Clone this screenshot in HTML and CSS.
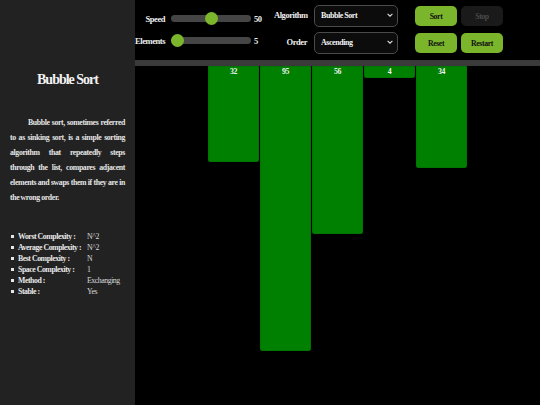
FILE: index.html
```html
<!DOCTYPE html>
<html lang="en">
<head>
<meta charset="utf-8">
<title>Sorting Visualizer</title>
<link rel="stylesheet" href="styles.css">
</head>
<body>
<aside class="sidebar">
  <h1 class="algo-title">Bubble Sort</h1>
  <p class="algo-desc">Bubble sort, sometimes referred to as sinking sort, is a simple sorting algorithm that repeatedly steps through the list, compares adjacent elements and swaps them if they are in the wrong order.</p>
  <ul class="facts">
    <li><span class="fact-label">Worst Complexity :</span><span class="fact-value">N^2</span></li>
    <li><span class="fact-label">Average Complexity :</span><span class="fact-value">N^2</span></li>
    <li><span class="fact-label">Best Complexity :</span><span class="fact-value">N</span></li>
    <li><span class="fact-label">Space Complexity :</span><span class="fact-value">1</span></li>
    <li><span class="fact-label">Method :</span><span class="fact-value">Exchanging</span></li>
    <li><span class="fact-label">Stable :</span><span class="fact-value">Yes</span></li>
  </ul>
</aside>
<main class="main">
  <header class="toolbar">
    <div class="group sliders">
      <label class="ctl-label" for="speed">Speed</label>
      <input class="range" id="speed" type="range" min="1" max="99" value="50">
      <span class="range-value">50</span>
      <label class="ctl-label" for="elements">Elements</label>
      <input class="range" id="elements" type="range" min="5" max="100" value="5">
      <span class="range-value">5</span>
    </div>
    <div class="group selects">
      <label class="ctl-label" for="algo">Algorithm</label>
      <div class="select-wrap">
        <select class="select" id="algo"><option>Bubble Sort</option></select>
        <svg class="chev" viewBox="0 0 10 6" width="6" height="4"><path d="M1 1 L5 5 L9 1" fill="none" stroke="#ddd" stroke-width="1.8"/></svg>
      </div>
      <label class="ctl-label" for="order">Order</label>
      <div class="select-wrap">
        <select class="select" id="order"><option>Ascending</option></select>
        <svg class="chev" viewBox="0 0 10 6" width="6" height="4"><path d="M1 1 L5 5 L9 1" fill="none" stroke="#ddd" stroke-width="1.8"/></svg>
      </div>
    </div>
    <div class="group buttons">
      <button class="btn">Sort</button>
      <button class="btn btn-disabled">Stop</button>
      <button class="btn">Reset</button>
      <button class="btn">Restart</button>
    </div>
  </header>
  <div class="divider"></div>
  <section class="bars">
    <div class="bar" style="height:96px"><span class="bar-value">32</span></div>
    <div class="bar" style="height:285px"><span class="bar-value">95</span></div>
    <div class="bar" style="height:168px"><span class="bar-value">56</span></div>
    <div class="bar" style="height:12px"><span class="bar-value">4</span></div>
    <div class="bar" style="height:102px"><span class="bar-value">34</span></div>
  </section>
</main>
</body>
</html>
```

FILE: styles.css
```css
* { box-sizing: border-box; }
html, body {
  margin: 0;
  height: 405px;
  overflow: hidden;
  background: #000;
  font-family: "Liberation Serif", "Times New Roman", serif;
  font-weight: bold;
  color: #e8e8e8;
}
body { display: flex; }

.sidebar {
  width: 135px;
  flex: none;
  height: 405px;
  background: #222;
  padding: 72px 10px 0 10px;
}
.algo-title {
  margin: 0;
  text-align: center;
  font-size: 14px;
  line-height: 16px;
  color: #f2f2f2;
  letter-spacing: -1px;
}
.algo-desc {
  margin: 27px 0 0 0;
  font-size: 7.8px;
  line-height: 15px;
  letter-spacing: -0.36px;
  word-spacing: -0.3px;
  text-align: justify;
  text-indent: 18px;
  color: #e6e6e6;
}
.facts {
  margin: 26px 0 0 0;
  padding: 0;
  list-style: none;
  font-size: 7.8px;
  line-height: 11px;
  letter-spacing: -0.45px;
}
.facts li {
  display: flex;
  align-items: center;
}
.facts li::before {
  content: "";
  width: 3px;
  height: 3px;
  background: #e6e6e6;
  margin: 0 4px 0 1px;
  flex: none;
}
.fact-label { width: 69px; flex: none; white-space: nowrap; }
.fact-value { font-weight: normal; color: #d8d8d8; }

.main {
  flex: 1;
  display: flex;
  flex-direction: column;
}
.toolbar {
  height: 60px;
  display: flex;
  align-items: flex-start;
}
.group { display: grid; }
.ctl-label {
  font-size: 8.5px;
  letter-spacing: -0.45px;
  text-align: right;
  white-space: nowrap;
  align-self: center;
  color: #f0f0f0;
}
.sliders {
  grid-template-columns: 30px 89px 20px;
  grid-auto-rows: 21px;
  row-gap: 1px;
  padding-top: 8px;
  align-items: center;
}
.range {
  -webkit-appearance: none;
  appearance: none;
  width: 80px;
  height: 13px;
  margin: 0 3px 0 6px;
  background: transparent;
}
.range::-webkit-slider-runnable-track {
  height: 7px;
  background: #454545;
  border-radius: 4px;
}
.range::-webkit-slider-thumb {
  -webkit-appearance: none;
  width: 13px;
  height: 13px;
  border-radius: 50%;
  background: #7ab52c;
  margin-top: -3px;
  border: none;
}
.range-value {
  font-size: 8.5px;
  letter-spacing: -0.45px;
  color: #f0f0f0;
}
.selects {
  grid-template-columns: 33px 84px;
  column-gap: 7px;
  grid-auto-rows: 22px;
  row-gap: 5px;
  padding-top: 4px;
}
.select-wrap { position: relative; }
.select {
  -webkit-appearance: none;
  appearance: none;
  width: 84px;
  height: 22px;
  margin: 0;
  background: #0c0c0c;
  color: #f2f2f2;
  border: 1px solid #4a4a4a;
  border-radius: 5px;
  padding: 0 0 0 6px;
  font-family: inherit;
  font-weight: bold;
  font-size: 8px;
  letter-spacing: -0.45px;
}
.chev {
  position: absolute;
  right: 5px;
  top: 9px;
}
.buttons {
  margin-left: 17px;
  grid-template-columns: 42px 42px;
  column-gap: 4px;
  grid-auto-rows: 20px;
  row-gap: 7px;
  padding-top: 6px;
}
.btn {
  margin: 0;
  border: none;
  border-radius: 5px;
  background: #7ab52c;
  color: #111;
  font-family: inherit;
  font-weight: bold;
  font-size: 7.8px;
  letter-spacing: -0.4px;
  padding: 0;
}
.btn-disabled {
  background: #1a1a1a;
  color: #4a4a4a;
}

.divider {
  height: 6px;
  background: #3a3a3a;
}
.bars {
  display: flex;
  justify-content: center;
  align-items: flex-start;
  gap: 1px;
}
.bar {
  width: 51px;
  background: #008000;
  border-radius: 0 0 3px 3px;
  box-shadow: inset 0 0 0 0.5px #006a00;
  display: flex;
  justify-content: center;
}
.bar-value {
  font-size: 7.8px;
  letter-spacing: -0.4px;
  line-height: 12px;
  color: #f0f0f0;
}
```
